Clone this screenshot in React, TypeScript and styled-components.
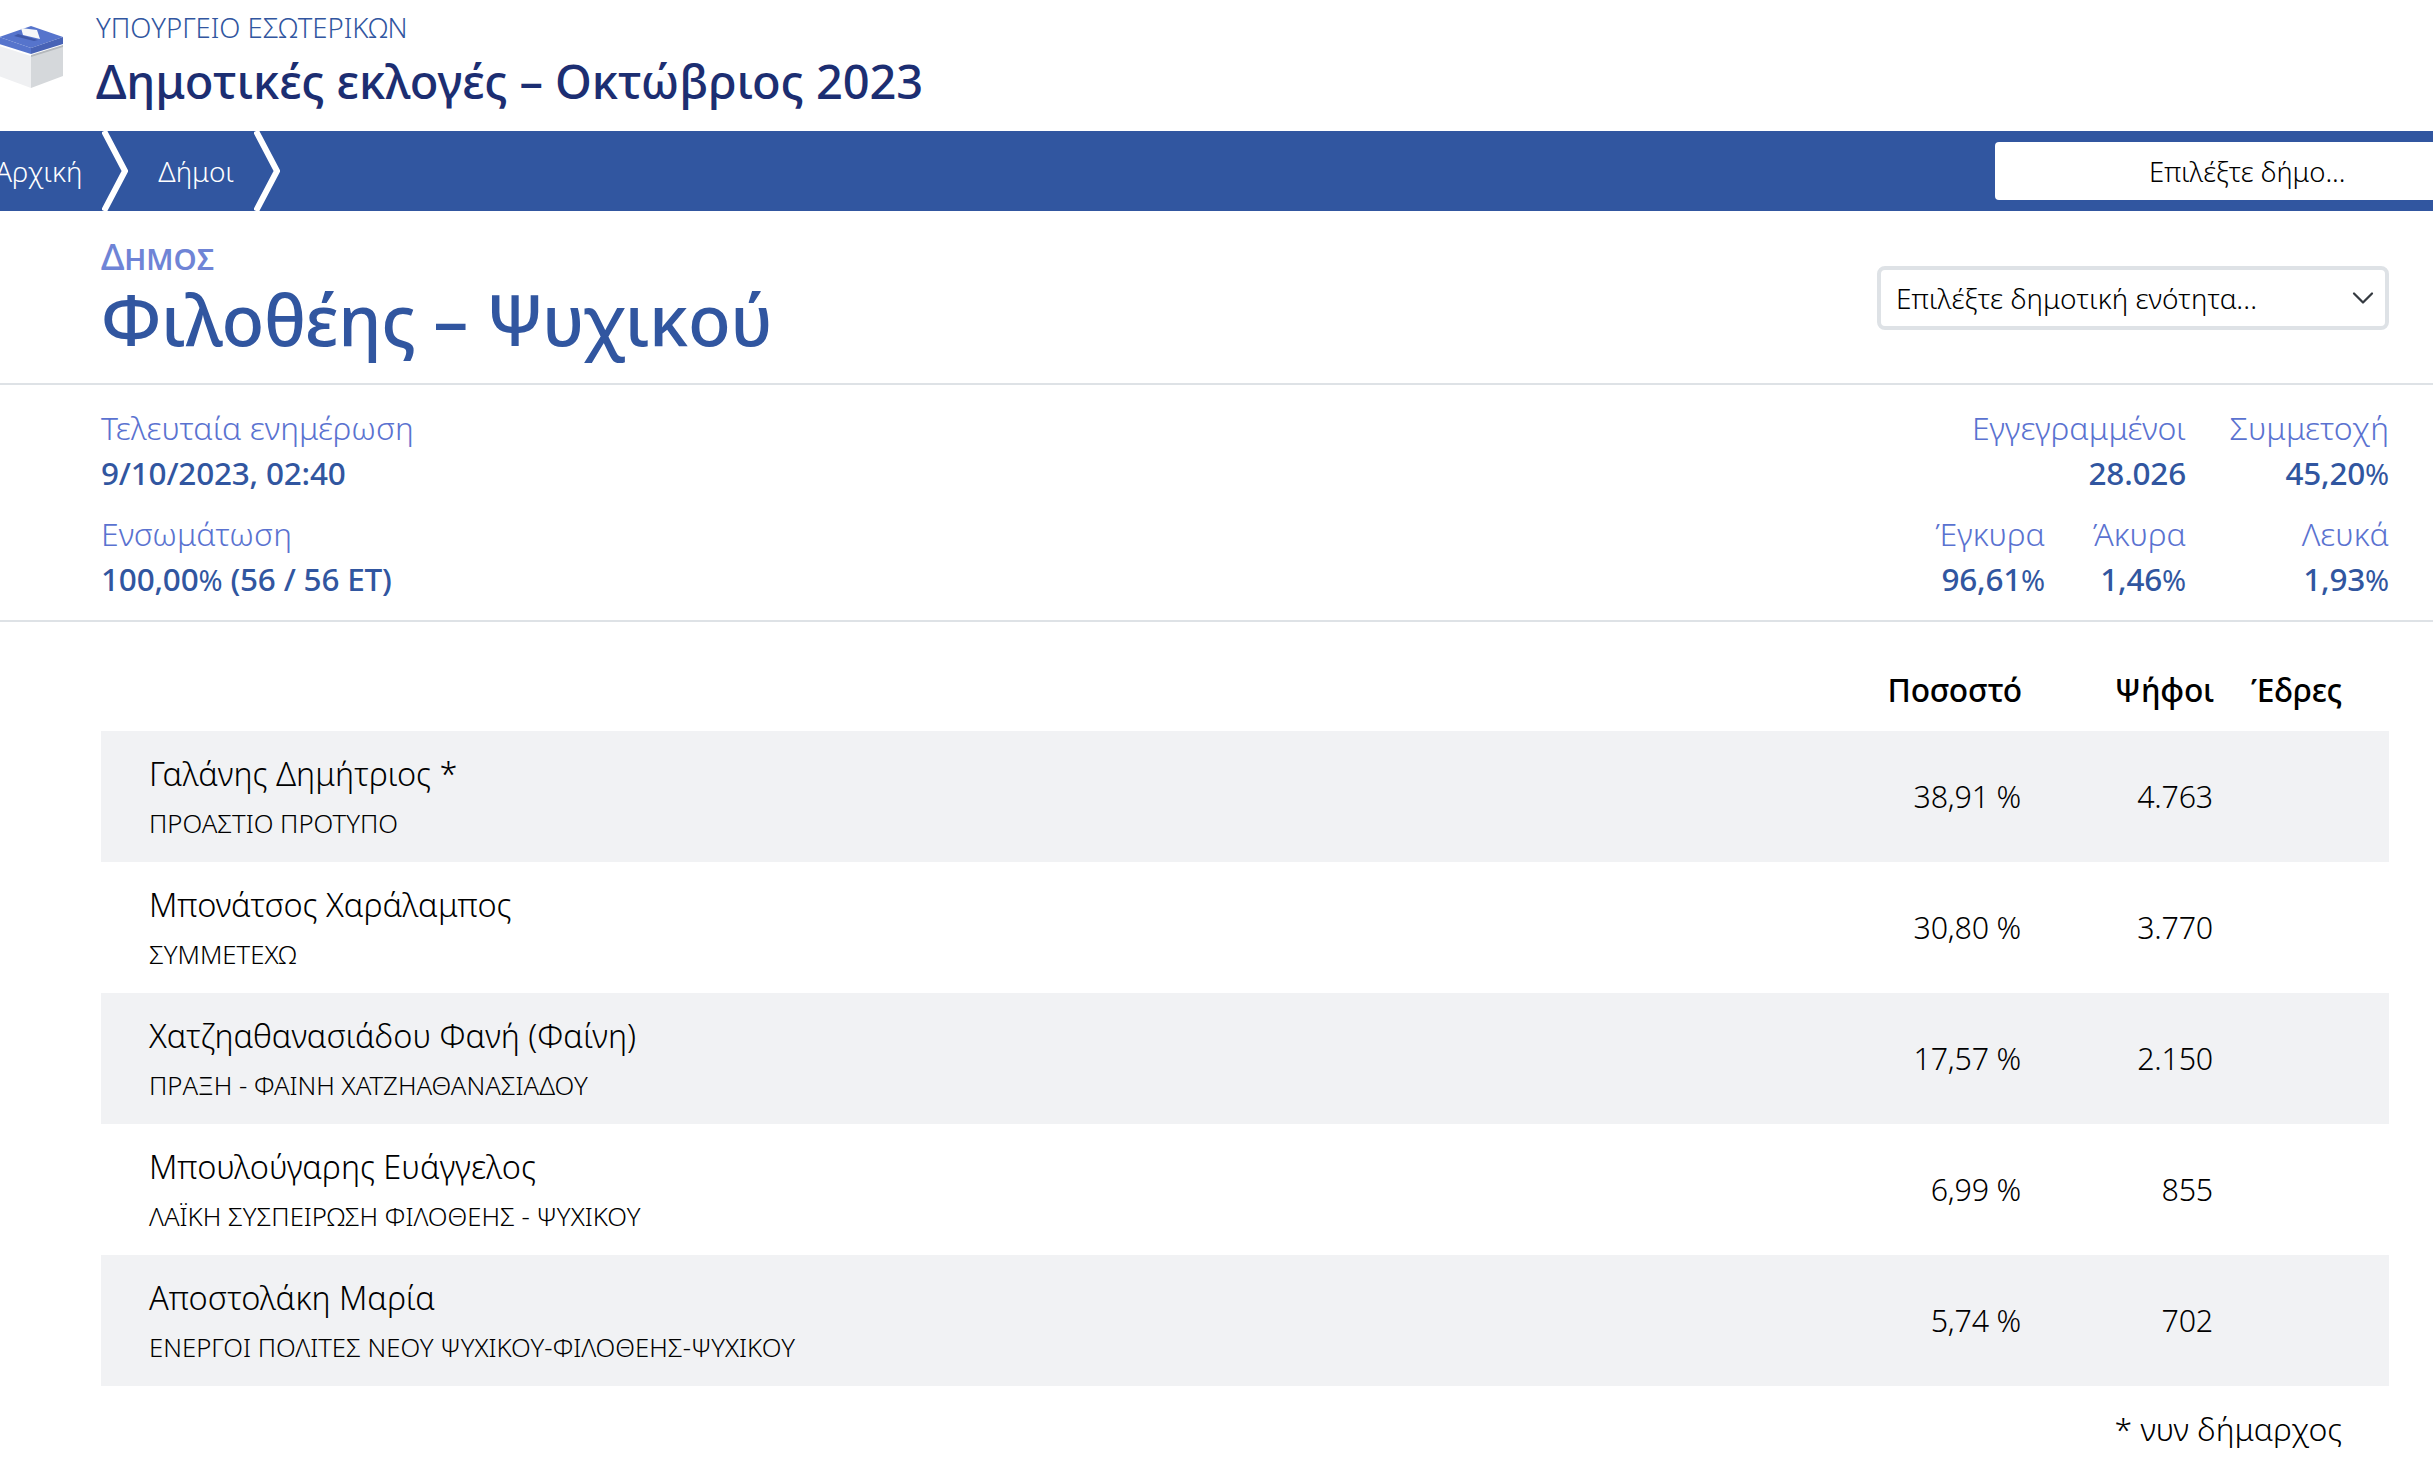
import React from 'react';
import styled, { createGlobalStyle } from 'styled-components';

const Global = createGlobalStyle`
  html, body { margin: 0; padding: 0; background: #fff; overflow: hidden; }
  body { font-family: "Noto Sans", "Open Sans", sans-serif; color: #111; }
`;

const Page = styled.div`
  width: 2433px;
  height: 1474px;
  overflow: hidden;
`;

const Header = styled.header`
  height: 131px;
  display: flex;
  align-items: flex-start;
  gap: 32px;
`;

const Logo = styled.svg`
  width: 65px;
  height: 64px;
  margin-top: 25px;
  margin-left: -1px;
  flex: none;
`;

const HeaderText = styled.div`
  display: flex;
  flex-direction: column;
`;

const Ministry = styled.div`
  font-size: 27.5px;
  line-height: 32px;
  margin-top: 12px;
  font-weight: 300;
  color: #3156a0;
`;

const SiteTitle = styled.h1`
  margin: 9px 0 0;
  font-size: 47px;
  line-height: 56px;
  font-weight: 500;
  color: #1c2e72;
  letter-spacing: -0.1px;
`;

const NavBar = styled.nav`
  height: 80px;
  background: #3156a0;
  display: flex;
  align-items: center;
  justify-content: space-between;
`;

const Crumbs = styled.div`
  display: flex;
  align-items: stretch;
  height: 100%;
`;

const Crumb = styled.a<{ $first?: boolean }>`
  display: flex;
  align-items: center;
  font-size: 28px;
  font-weight: 300;
  color: #fff;
  margin-left: ${p => (p.$first ? '-5px' : '0')};
  padding-left: ${p => (p.$first ? '0' : '30px')};
`;

const Chevron = styled.svg`
  width: 26px;
  height: 80px;
  margin-left: 20px;
  flex: none;
`;

const CitySelect = styled.div`
  width: 438px;
  height: 58px;
  background: #fff;
  border-radius: 4px 0 0 4px;
  display: flex;
  align-items: center;
  font-size: 27.5px;
  font-weight: 300;
  color: #000;
  box-sizing: border-box;
  padding-left: 154px;
`;

const TitleRow = styled.section`
  height: 174px;
  box-sizing: border-box;
  padding: 26px 44px 0 101px;
  border-bottom: 2px solid #dee2e6;
  display: flex;
  justify-content: space-between;
`;

const Kicker = styled.div`
  font-size: 36px;
  line-height: 40px;
  font-weight: 500;
  color: #6f84d6;
  font-variant: small-caps;
`;

const Municipality = styled.h2`
  margin: 0;
  font-size: 70px;
  line-height: 84px;
  font-weight: 500;
  color: #3156a0;
  letter-spacing: -0.35px;
`;

const UnitSelect = styled.div`
  width: 512px;
  height: 64px;
  margin-top: 29px;
  box-sizing: border-box;
  border: 4px solid #dee2e6;
  border-radius: 8px;
  padding: 0 10px 0 15px;
  display: flex;
  align-items: center;
  justify-content: space-between;
  font-size: 28px;
  font-weight: 300;
  letter-spacing: 0.08px;
  color: #000;
`;

const SelectCaret = styled.svg`
  width: 24px;
  height: 24px;
  flex: none;
`;

const StatsBlock = styled.section`
  height: 237px;
  box-sizing: border-box;
  padding: 20px 44px 0 101px;
  border-bottom: 2px solid #dee2e6;
  display: flex;
  justify-content: space-between;
`;

const StatColumn = styled.div`
  display: flex;
  flex-direction: column;
  gap: 17px;
`;

const StatRow = styled.div`
  display: flex;
  justify-content: flex-end;
`;

const Stat = styled.div<{ $right?: boolean; $width?: number }>`
  text-align: ${p => (p.$right ? 'right' : 'left')};
  width: ${p => (p.$width ? `${p.$width}px` : 'auto')};
`;

const StatLabel = styled.div`
  font-size: 32px;
  line-height: 45px;
  font-weight: 300;
  color: #5a72d0;
  white-space: nowrap;
`;

const StatValue = styled.div`
  font-size: 31.5px;
  height: 44px;
  line-height: 45px;
  font-weight: 500;
  color: #3156a0;
  letter-spacing: -0.2px;
  white-space: nowrap;
`;

const Percent = styled.span`
  font-size: 29px;
  line-height: 1;
  font-weight: 400;
`;

const Results = styled.section`
  padding: 48px 44px 0 101px;
`;

const ColumnHead = styled.div`
  display: grid;
  grid-template-columns: 1fr 220px 192px 128px;
  height: 61px;
  box-sizing: border-box;
  font-size: 31.7px;
  line-height: 40px;
  font-weight: 500;
  letter-spacing: -0.2px;
  color: #000;
  padding-right: 47px;
`;

const HeadCell = styled.div`
  text-align: right;
`;

const Row = styled.div<{ $shaded: boolean }>`
  display: grid;
  grid-template-columns: 1fr 220px 192px 128px;
  height: 131px;
  align-items: center;
  padding: 0 47px 0 48px;
  background: ${p => (p.$shaded ? '#f1f2f4' : '#fff')};
`;

const CandidateCell = styled.div`
  padding-top: 5px;
`;

const Candidate = styled.div`
  font-size: 32.5px;
  line-height: 50px;
  font-weight: 300;
  color: #000;
`;

const Party = styled.div`
  font-size: 25.7px;
  line-height: 50px;
  font-weight: 300;
  color: #000;
`;

const Num = styled.div`
  font-size: 30.4px;
  font-weight: 300;
  letter-spacing: -0.2px;
  text-align: right;
  color: #000;
  margin-right: 1px;
`;

const Footnote = styled.div`
  font-size: 32px;
  line-height: 44px;
  font-weight: 300;
  text-align: right;
  padding: 21px 47px 0 0;
  color: #000;
`;

const rows = [
  ['Γαλάνης Δημήτριος *', 'ΠΡΟΑΣΤΙΟ ΠΡΟΤΥΠΟ', '38,91 %', '4.763'],
  ['Μπονάτσος Χαράλαμπος', 'ΣΥΜΜΕΤΕΧΩ', '30,80 %', '3.770'],
  ['Χατζηαθανασιάδου Φανή (Φαίνη)', 'ΠΡΑΞΗ - ΦΑΙΝΗ ΧΑΤΖΗΑΘΑΝΑΣΙΑΔΟΥ', '17,57 %', '2.150'],
  ['Μπουλούγαρης Ευάγγελος', 'ΛΑΪΚΗ ΣΥΣΠΕΙΡΩΣΗ ΦΙΛΟΘΕΗΣ - ΨΥΧΙΚΟΥ', '6,99 %', '855'],
  ['Αποστολάκη Μαρία', 'ΕΝΕΡΓΟΙ ΠΟΛΙΤΕΣ ΝΕΟΥ ΨΥΧΙΚΟΥ-ΦΙΛΟΘΕΗΣ-ΨΥΧΙΚΟΥ', '5,74 %', '702'],
];

const ChevronMark = () => (
  <Chevron viewBox="0 0 26 80">
    <path d="M2 0 L23 40 L2 80" fill="none" stroke="#fff" strokeWidth="6" />
  </Chevron>
);

export default function App() {
  return (
    <Page>
      <Global />
      <Header>
        <Logo viewBox="-1 25 65 64">
          <path d="M-1 46 L31 56 L31 88 L-1 76Z" fill="#eff0f2" />
          <path d="M63 46 L31 56 L31 88 L63 76Z" fill="#d5d8db" />
          <path d="M63 45 L31 55 L31 57 L63 47Z" fill="#b4b8bc" />
          <path d="M31 26 L63 37 L31 48 L-1 37Z" fill="#5674cc" />
          <path d="M-1 37 L31 48 L31 54 L-1 44Z" fill="#5674cc" />
          <path d="M63 37 L31 48 L31 54 L63 44Z" fill="#4863b6" />
          <path d="M14 36 L34 41 L38 40 L18 34Z" fill="#3f58a8" />
          <path d="M21 28 L37 30 L40 39 L23 35Z" fill="#f6f7f8" />
        </Logo>
        <HeaderText>
          <Ministry>ΥΠΟΥΡΓΕΙΟ ΕΣΩΤΕΡΙΚΩΝ</Ministry>
          <SiteTitle>Δημοτικές εκλογές – Οκτώβριος 2023</SiteTitle>
        </HeaderText>
      </Header>
      <NavBar>
        <Crumbs>
          <Crumb $first>Αρχική</Crumb>
          <ChevronMark />
          <Crumb>Δήμοι</Crumb>
          <ChevronMark />
        </Crumbs>
        <CitySelect>Επιλέξτε δήμο...</CitySelect>
      </NavBar>
      <TitleRow>
        <div>
          <Kicker>Δήμος</Kicker>
          <Municipality>Φιλοθέης – Ψυχικού</Municipality>
        </div>
        <UnitSelect>
          Επιλέξτε δημοτική ενότητα...
          <SelectCaret viewBox="0 0 16 16">
            <path d="M2 5l6 6 6-6" fill="none" stroke="#343a40" strokeWidth="1.5" strokeLinecap="round" strokeLinejoin="round" />
          </SelectCaret>
        </UnitSelect>
      </TitleRow>
      <StatsBlock>
        <StatColumn>
          <Stat>
            <StatLabel>Τελευταία ενημέρωση</StatLabel>
            <StatValue>9/10/2023, 02:40</StatValue>
          </Stat>
          <Stat>
            <StatLabel>Ενσωμάτωση</StatLabel>
            <StatValue>100,00<Percent>%</Percent> (56 / 56 ET)</StatValue>
          </Stat>
        </StatColumn>
        <StatColumn>
          <StatRow>
            <Stat $right $width={240}>
              <StatLabel>Εγγεγραμμένοι</StatLabel>
              <StatValue>28.026</StatValue>
            </Stat>
            <Stat $right $width={203}>
              <StatLabel>Συμμετοχή</StatLabel>
              <StatValue>45,20<Percent>%</Percent></StatValue>
            </Stat>
          </StatRow>
          <StatRow>
            <Stat $right $width={141}>
              <StatLabel>Έγκυρα</StatLabel>
              <StatValue>96,61<Percent>%</Percent></StatValue>
            </Stat>
            <Stat $right $width={141}>
              <StatLabel>Άκυρα</StatLabel>
              <StatValue>1,46<Percent>%</Percent></StatValue>
            </Stat>
            <Stat $right $width={203}>
              <StatLabel>Λευκά</StatLabel>
              <StatValue>1,93<Percent>%</Percent></StatValue>
            </Stat>
          </StatRow>
        </StatColumn>
      </StatsBlock>
      <Results>
        <ColumnHead>
          <span />
          <HeadCell>Ποσοστό</HeadCell>
          <HeadCell>Ψήφοι</HeadCell>
          <HeadCell>Έδρες</HeadCell>
        </ColumnHead>
        {rows.map((r, i) => (
          <Row key={r[0]} $shaded={i % 2 === 0}>
            <CandidateCell>
              <Candidate>{r[0]}</Candidate>
              <Party>{r[1]}</Party>
            </CandidateCell>
            <Num>{r[2]}</Num>
            <Num>{r[3]}</Num>
            <span />
          </Row>
        ))}
        <Footnote>* νυν δήμαρχος</Footnote>
      </Results>
    </Page>
  );
}
